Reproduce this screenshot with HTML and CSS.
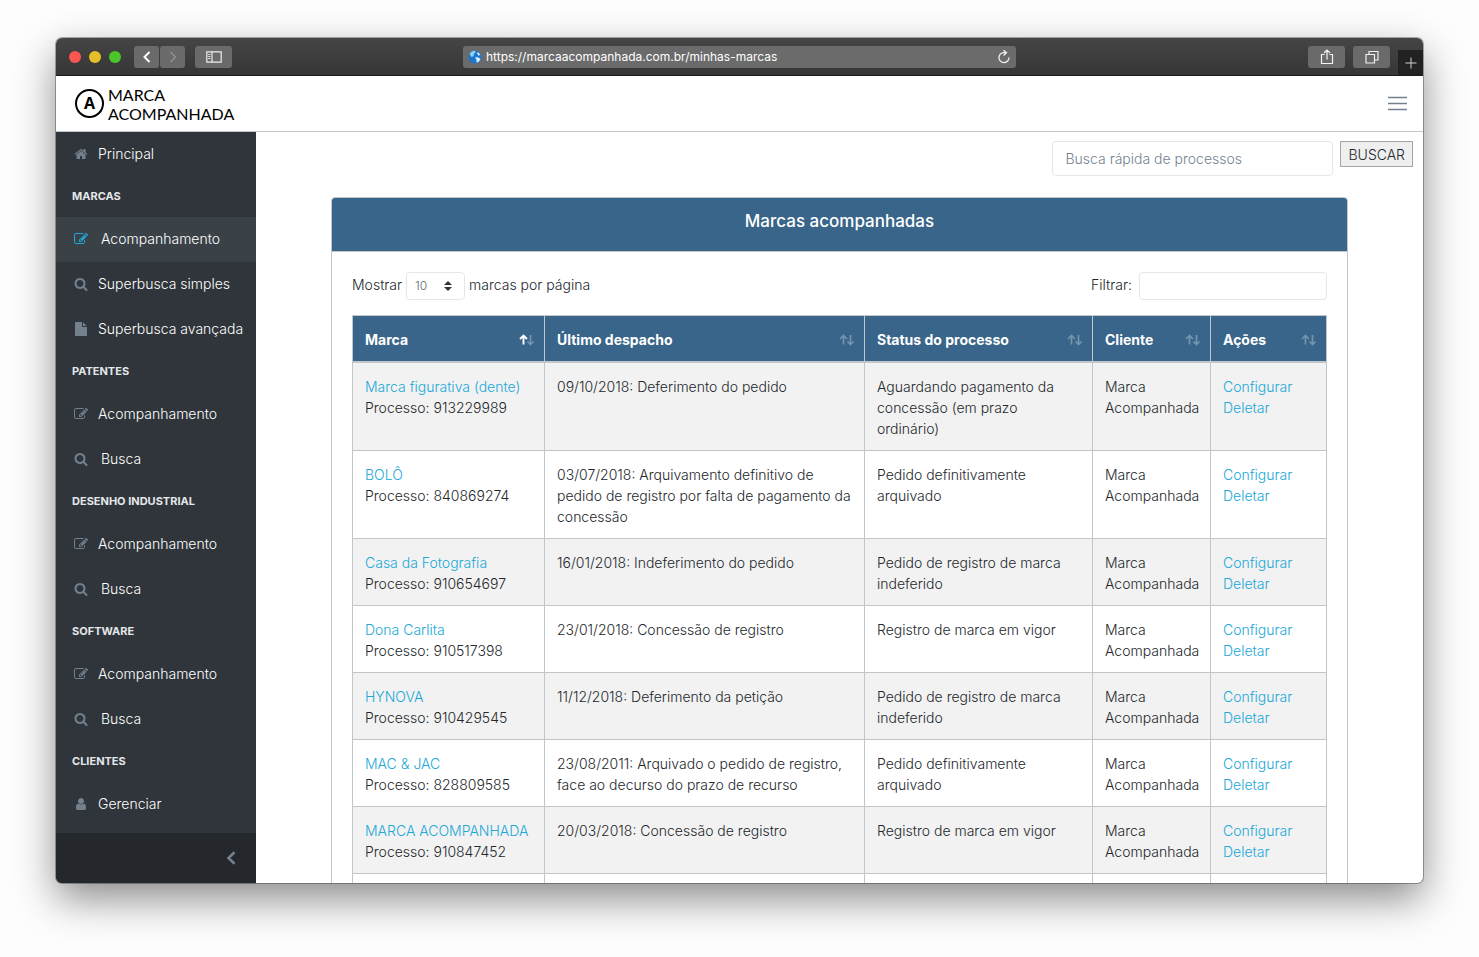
FILE: index.html
```html
<!DOCTYPE html>
<html lang="pt-BR">
<head>
<meta charset="utf-8">
<meta name="viewport" content="width=device-width, initial-scale=1">
<title>Marca Acompanhada</title>
<link rel="stylesheet" href="styles.css">
</head>
<body>
<svg class="symbols" aria-hidden="true">
  <symbol id="home" viewBox="0 0 1792 1792"><path d="M1472 992v480q0 26-19 45t-45 19h-384v-384h-256v384h-384q-26 0-45-19t-19-45v-480q0-1 .5-3t.5-3l575-474 575 474q1 2 1 6zm223-69l-62 74q-8 9-21 11h-3q-13 0-21-7l-692-577-692 577q-12 8-24 7-13-2-21-11l-62-74q-8-10-7-23.5t11-21.5l719-599q32-26 76-26t76 26l244 204v-195q0-14 9-23t23-9h192q14 0 23 9t9 23v408l219 182q10 8 11 21.5t-7 23.5z"/></symbol>
  <symbol id="edit" viewBox="0 0 1792 1792"><path d="M888 1184l116-116-152-152-116 116v56h96v96h56zm440-720q-16-16-33 1l-350 350q-17 17-1 33t33-1l350-350q17-17 1-33zm80 594v190q0 119-84.5 203.5t-203.5 84.5h-832q-119 0-203.5-84.5t-84.5-203.5v-832q0-119 84.5-203.5t203.5-84.5h832q63 0 117 25 15 7 18 23 3 17-9 29l-49 49q-14 14-32 8-23-6-45-6h-832q-66 0-113 47t-47 113v832q0 66 47 113t113 47h832q66 0 113-47t47-113v-126q0-13 9-22l64-64q15-15 35-7t20 29zm-96-738l288 288-672 672h-288v-288zm444 132l-92 92-288-288 92-92q28-28 68-28t68 28l152 152q28 28 28 68t-28 68z"/></symbol>
  <symbol id="search" viewBox="0 0 1792 1792"><path d="M1216 832q0-185-131.500-316.500t-316.500-131.500-316.500 131.500-131.500 316.500 131.500 316.500 316.500 131.500 316.500-131.500 131.500-316.500zm512 832q0 52-38 90t-90 38q-54 0-90-38l-343-342q-179 124-399 124-143 0-273.500-55.500t-225-150-150-225-55.500-273.500 55.500-273.500 150-225 225-150 273.500-55.500 273.500 55.500 225 150 150 225 55.500 273.500q0 220-124 399l343 343q37 37 37 90z"/></symbol>
  <symbol id="file" viewBox="0 0 1792 1792"><path d="M1152 512v-472q22 14 36 28l408 408q14 14 28 36h-472zm-128 32q0 40 28 68t68 28h544v1056q0 40-28 68t-68 28h-1344q-40 0-68-28t-28-68v-1600q0-40 28-68t68-28h800v544z"/></symbol>
  <symbol id="user" viewBox="0 0 1792 1792"><path d="M1536 1399q0 109-62.500 187t-150.500 78h-854q-88 0-150.500-78t-62.500-187q0-85 8.500-160.500t31.500-152 58.500-131 94-89 134.500-34.500q131 128 313 128t313-128q76 0 134.500 34.500t94 89 58.500 131 31.500 152 8.500 160.500zm-256-887q0 159-112.500 271.500t-271.500 112.500-271.500-112.500-112.500-271.500 112.500-271.500 271.500-112.500 271.500 112.500 112.500 271.500z"/></symbol>
  <symbol id="sort" viewBox="0 0 16 12"><g fill="none" stroke="currentColor" stroke-width="1.700"><path d="M4.500 10.500V1.500M1 5l3.500-3.500L8 5"/><path d="M11.500 1v9.500M8.500 7.500l3 3 3-3"/></g></symbol>
</svg>

<div class="window">
  <div class="toolbar">
    <div class="tools">
      <div class="lights"><span class="light red"></span><span class="light yellow"></span><span class="light green"></span></div>
      <div class="pair">
        <button class="tool small" aria-label="Voltar"><svg width="12" height="14" viewBox="0 0 12 14"><path d="M8.500 2L3.500 7l5 5" fill="none" stroke="#fff" stroke-width="2"/></svg></button>
        <button class="tool small" aria-label="Avançar"><svg width="12" height="14" viewBox="0 0 12 14"><path d="M3.500 2l5 5-5 5" fill="none" stroke="#929292" stroke-width="1.500"/></svg></button>
      </div>
      <button class="tool" aria-label="Barra lateral"><svg width="16" height="12" viewBox="0 0 16 12" fill="none" stroke="#eee" stroke-width="1.200"><path d="M.8.800h14.400v10.400H.8zM6 1v10M2.300 3.500h2M2.300 5.500h2M2.300 7.500h2"/></svg></button>
    </div>
    <div class="address">
      <svg width="14" height="14" viewBox="0 0 14 14"><circle cx="7" cy="7" r="6.500" fill="#1976ce"/><path d="M1.500 4Q4 0 7.500 1L7 3 5.500 4.500 6 6 3.500 7z" fill="#8ed0f5"/><path d="M7 7l3.500.5L12.500 9Q11 12.500 8.500 12.500L8.500 10zM10 2l2.500 3-2 .5-1.500-2z" fill="#d5eefa"/></svg>
      <span class="url">https://marcaacompanhada.com.br/minhas-marcas</span>
      <svg width="14" height="14" viewBox="0 0 14 14"><path d="M8.500 2.800A5 5 0 1 0 12 7.500M6.500 .2l3 2.600-3 2.600" fill="none" stroke="#eee" stroke-width="1.300"/></svg>
    </div>
    <div class="tools end">
      <button class="tool" aria-label="Compartilhar"><svg width="14" height="16" viewBox="0 0 14 16"><path d="M4.500 5.500h-3v9h11v-9h-3M7 10.500V1M4 4l3-3 3 3" fill="none" stroke="#f3f3f3" stroke-width="1.200"/></svg></button>
      <button class="tool" aria-label="Abas"><svg width="14" height="14" viewBox="0 0 14 14"><path d="M1 4.500h8.500V13H1zM4 4V1.500h9V10H10" fill="none" stroke="#eee" stroke-width="1.200"/></svg></button>
      <button class="newtab" aria-label="Nova aba"><svg width="12" height="12" viewBox="0 0 12 12"><path d="M6 .5v11M.5 6h11" stroke="#d0d0d0" stroke-width="1"/></svg></button>
    </div>
  </div>

  <header class="header">
    <a class="brand" href="#">
      <span class="brand-mark">A</span>
      <span class="brand-name"><span>MARCA</span><span>ACOMPANHADA</span></span>
    </a>
    <button class="menu" aria-label="Menu"><svg width="19" height="15" viewBox="0 0 19 15"><path d="M0 1.500h19M0 7.500h19M0 13.500h19" stroke="#73818f" stroke-width="1.500"/></svg></button>
  </header>

  <div class="app">
    <aside class="sidebar">
      <nav class="nav">
        <a class="item" href="#"><svg class="icon"><use href="#home"/></svg>Principal</a>
        <h2 class="group">Marcas</h2>
        <a class="item wide active" href="#"><svg class="icon"><use href="#edit"/></svg>Acompanhamento</a>
        <a class="item" href="#"><svg class="icon"><use href="#search"/></svg>Superbusca simples</a>
        <a class="item" href="#"><svg class="icon"><use href="#file"/></svg>Superbusca avançada</a>
        <h2 class="group">Patentes</h2>
        <a class="item" href="#"><svg class="icon"><use href="#edit"/></svg>Acompanhamento</a>
        <a class="item wide" href="#"><svg class="icon"><use href="#search"/></svg>Busca</a>
        <h2 class="group">Desenho Industrial</h2>
        <a class="item" href="#"><svg class="icon"><use href="#edit"/></svg>Acompanhamento</a>
        <a class="item wide" href="#"><svg class="icon"><use href="#search"/></svg>Busca</a>
        <h2 class="group">Software</h2>
        <a class="item" href="#"><svg class="icon"><use href="#edit"/></svg>Acompanhamento</a>
        <a class="item wide" href="#"><svg class="icon"><use href="#search"/></svg>Busca</a>
        <h2 class="group">Clientes</h2>
        <a class="item" href="#"><svg class="icon"><use href="#user"/></svg>Gerenciar</a>
      </nav>
      <button class="collapse" aria-label="Recolher menu"><svg width="10" height="14" viewBox="0 0 10 14"><path d="M8.500 1.200L2.500 7l6 5.800" fill="none" stroke="#73818f" stroke-width="2.600"/></svg></button>
    </aside>

    <main class="main">
      <form class="quick">
        <input class="field quick-field" type="text" placeholder="Busca rápida de processos" aria-label="Busca rápida de processos">
        <button class="quick-button" type="button">BUSCAR</button>
      </form>
      <section class="card">
        <h1 class="card-title">Marcas acompanhadas</h1>
        <div class="card-body">
          <div class="controls">
            <label class="length">Mostrar
              <span class="select-box"><select class="field length-select"><option>10</option><option>25</option><option>50</option></select><svg class="select-arrows" width="8" height="10" viewBox="0 0 8 10"><path d="M0 4l4-4 4 4zM0 6l4 4 4-4z" fill="#2f353a"/></svg></span>
              marcas por página</label>
            <label class="filter">Filtrar:<input class="field filter-field" type="search"></label>
          </div>
          <table class="table">
            <colgroup><col class="c-marca"><col class="c-despacho"><col class="c-status"><col class="c-cliente"><col class="c-acoes"></colgroup>
            <thead>
              <tr>
                <th><button class="sort">Marca<svg class="sort-icon" viewBox="0 0 16 12"><path d="M11.500 1v9.500M8.500 7.500l3 3 3-3" fill="none" stroke="currentColor" stroke-width="1.700"/><path d="M4.500 10.500V1.500M1 5l3.500-3.500L8 5" fill="none" stroke="#fff" stroke-width="1.900"/></svg></button></th>
                <th><button class="sort">Último despacho<svg class="sort-icon"><use href="#sort"/></svg></button></th>
                <th><button class="sort">Status do processo<svg class="sort-icon"><use href="#sort"/></svg></button></th>
                <th><button class="sort">Cliente<svg class="sort-icon"><use href="#sort"/></svg></button></th>
                <th><button class="sort">Ações<svg class="sort-icon"><use href="#sort"/></svg></button></th>
              </tr>
            </thead>
            <tbody>
              <tr><td><a href="#">Marca figurativa (dente)</a><br>Processo: 913229989</td><td>09/10/2018: Deferimento do pedido</td><td>Aguardando pagamento da concessão (em prazo ordinário)</td><td>Marca Acompanhada</td><td><a href="#">Configurar</a><br><a href="#">Deletar</a></td></tr>
              <tr><td><a href="#">BOLÔ</a><br>Processo: 840869274</td><td>03/07/2018: Arquivamento definitivo de pedido de registro por falta de pagamento da concessão</td><td>Pedido definitivamente arquivado</td><td>Marca Acompanhada</td><td><a href="#">Configurar</a><br><a href="#">Deletar</a></td></tr>
              <tr><td><a href="#">Casa da Fotografia</a><br>Processo: 910654697</td><td>16/01/2018: Indeferimento do pedido</td><td>Pedido de registro de marca indeferido</td><td>Marca Acompanhada</td><td><a href="#">Configurar</a><br><a href="#">Deletar</a></td></tr>
              <tr><td><a href="#">Dona Carlita</a><br>Processo: 910517398</td><td>23/01/2018: Concessão de registro</td><td>Registro de marca em vigor</td><td>Marca Acompanhada</td><td><a href="#">Configurar</a><br><a href="#">Deletar</a></td></tr>
              <tr><td><a href="#">HYNOVA</a><br>Processo: 910429545</td><td>11/12/2018: Deferimento da petição</td><td>Pedido de registro de marca indeferido</td><td>Marca Acompanhada</td><td><a href="#">Configurar</a><br><a href="#">Deletar</a></td></tr>
              <tr><td><a href="#">MAC &amp; JAC</a><br>Processo: 828809585</td><td>23/08/2011: Arquivado o pedido de registro, face ao decurso do prazo de recurso</td><td>Pedido definitivamente arquivado</td><td>Marca Acompanhada</td><td><a href="#">Configurar</a><br><a href="#">Deletar</a></td></tr>
              <tr><td><a href="#">MARCA ACOMPANHADA</a><br>Processo: 910847452</td><td>20/03/2018: Concessão de registro</td><td>Registro de marca em vigor</td><td>Marca Acompanhada</td><td><a href="#">Configurar</a><br><a href="#">Deletar</a></td></tr>
              <tr><td></td><td></td><td></td><td></td><td></td></tr>
            </tbody>
          </table>
        </div>
      </section>
    </main>
  </div>
</div>
</body>
</html>
```
FILE: styles.css
```css
* { box-sizing: border-box; }

body {
  margin: 0;
  height: 100vh;
  padding: 38px 56px 74px;
  display: flex;
  overflow: hidden;
  background: #fdfdfd;
  color: #23282c;
  font: 300 14px/21px Inter, "Liberation Sans", sans-serif;
}

button, input, select { font: inherit; color: inherit; margin: 0; }
button { border: 0; padding: 0; background: none; cursor: pointer; }
svg { display: block; flex: none; }
a { color: #20a8d8; text-decoration: none; }
.symbols { position: absolute; width: 0; height: 0; }

.window {
  flex: 1;
  min-width: 0;
  display: flex;
  flex-direction: column;
  overflow: hidden;
  border-radius: 6px;
  background: #fff;
  box-shadow: 0 0 0 1px rgba(0, 0, 0, .3), 0 16px 40px rgba(0, 0, 0, .45);
}

/* Browser toolbar */
.toolbar {
  display: flex;
  flex: none;
  height: 38px;
  background: linear-gradient(#454545, #363636);
  border-bottom: 1px solid #1c1c1c;
  align-items: center;
}
.tools { flex: 1; display: flex; align-items: center; gap: 13px; }
.tools.end { align-self: stretch; justify-content: flex-end; gap: 8px; }
.tools.end .tool + .tool { margin-left: 0; }
.lights { display: flex; gap: 8px; margin-left: 13px; }
.light { width: 12px; height: 12px; border-radius: 50%; }
.red { background: #fc5650; }
.yellow { background: #e5bf28; }
.green { background: #4cc52b; }
.pair { display: flex; gap: 1px; margin-right: -3px; }
.tool {
  display: flex;
  align-items: center;
  justify-content: center;
  width: 37px;
  height: 22px;
  border-radius: 3px;
  background: #6a6a6a;
}
.small { width: 25px; }
.newtab {
  display: flex;
  align-items: center;
  justify-content: center;
  align-self: flex-end;
  width: 25px;
  height: 25px;
  background: #222;
}
.address {
  display: flex;
  align-items: center;
  gap: 4px;
  width: 553px;
  height: 22px;
  padding: 0 5px;
  border-radius: 3px;
  background: #6b6b6b;
  color: #fff;
  font-size: 12px;
  font-weight: 400;
}
.url { flex: 1; white-space: nowrap; }

/* Site header */
.header {
  display: flex;
  flex: none;
  align-items: center;
  justify-content: space-between;
  height: 56px;
  padding: 0 16px 0 19px;
  border-bottom: 1px solid #c0c6ca;
}
.brand { display: flex; align-items: center; gap: 4px; color: #000; font-family: Lato, sans-serif; font-weight: 400; }
.brand-mark {
  width: 29px;
  height: 29px;
  border: 2px solid #000;
  border-radius: 50%;
  text-align: center;
  font-family: "Open Sans", sans-serif;
  font-size: 16px;
  font-weight: 700;
  line-height: 25px;
}
.brand-name { display: flex; flex-direction: column; font-size: 16px; line-height: 19px; }

.app { flex: 1; display: flex; min-height: 0; }

/* Sidebar */
.sidebar { display: flex; flex: none; flex-direction: column; width: 200px; background: #2f353a; color: #fff; }
.nav { flex: 1; min-height: 0; overflow: hidden; }
.item { display: flex; align-items: center; height: 45px; padding: 0 16px 2px; gap: 10px; color: #fff; white-space: nowrap; }
.wide { gap: 13px; }
.icon { width: 14px; height: 14px; margin-left: 2px; fill: #73818f; }
.active { background: #3a4248; }
.active .icon { fill: #20a8d8; }
.group { margin: 0; padding: 9px 16px 10px; font-size: 11px; font-weight: 700; line-height: 21px; text-transform: uppercase; color: #e4e7ea; }
.collapse { display: flex; align-items: center; justify-content: flex-end; height: 50px; padding-right: 20px; background: #24282c; }

/* Content */
.main { flex: 1; min-width: 0; overflow: hidden; }
.field {
  border: 1px solid #e4e7ea;
  border-radius: 4px;
  background: #fff;
  color: #5c6873;
  outline: 0;
}
.quick { display: flex; justify-content: flex-end; align-items: flex-start; gap: 7px; padding: 9px 10px 21px; }
.quick-field { width: 281px; height: 35px; padding: 0 12px; }
.quick-field::placeholder { color: #73818f; opacity: 1; }
.quick-button { height: 26px; padding: 0 7px; border: 1px solid #a5a5a5; background: #efefef; }

.card { margin: 0 75px; border: 1px solid #c0c6ca; border-radius: 4px; overflow: hidden; }
.card-title {
  margin: 0;
  padding: 13px 20px 19px;
  border-bottom: 1px solid #c0c6ca;
  background: #386589;
  color: #fff;
  font-size: 17px;
  font-weight: 500;
  line-height: 21px;
  text-align: center;
}
.card-body { padding: 20px; }
.controls { display: flex; justify-content: space-between; margin-bottom: 15px; line-height: 26px; }
.length { display: flex; align-items: flex-start; gap: 4px; }
.select-box { position: relative; }
.length-select { display: block; appearance: none; width: 59px; height: 28px; padding: 0 8px; font-size: 12px; }
.select-arrows { position: absolute; right: 13px; top: 9px; }
.filter { display: flex; align-items: flex-start; gap: 7px; }
.filter-field { width: 188px; height: 28px; padding: 0 8px; }

.table { width: 100%; table-layout: fixed; border-collapse: collapse; }
.c-marca { width: 192px; }
.c-despacho { width: 33%; }
.c-status { width: 228px; }
.c-cliente { width: 118px; }
.c-acoes { width: 116px; }
.table th, .table td { border: 1px solid #c0c6ca; padding: 13px 12px 11px; vertical-align: top; text-align: left; }
.table th { border-bottom-width: 2px; padding: 0; background: #386589; }
.table tbody tr:nth-child(odd) { background: #f2f2f2; }
.table tbody tr:last-child td { height: 67px; }
.sort {
  display: flex;
  width: 100%;
  align-items: center;
  justify-content: space-between;
  padding: 13px 9px 11px 12px;
  color: #fff;
  font-weight: 700;
}
.sort-icon { width: 16px; height: 12px; color: #7495ae; }
```
